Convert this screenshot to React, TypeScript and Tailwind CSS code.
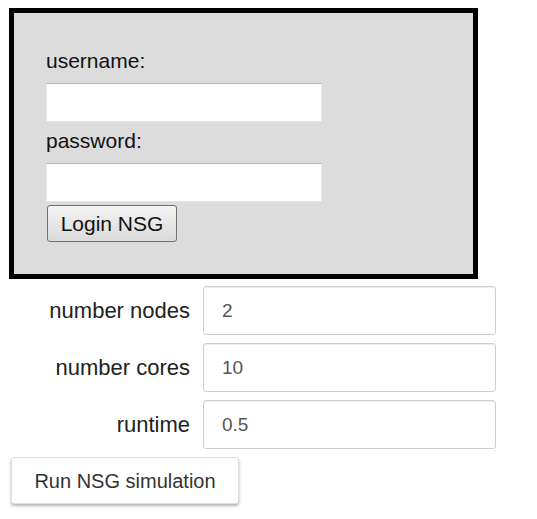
export default function App() {
  const rows = [
    { label: "number nodes", value: "2" },
    { label: "number cores", value: "10" },
    { label: "runtime", value: "0.5" },
  ];

  return (
    <div className="min-h-[519px] w-[537px] bg-white [font-family:'Liberation_Sans',Arial,sans-serif] pt-[8px]">
      {/* Login panel */}
      <div className="ml-[9px] h-[271px] w-[469px] border-[5px] border-black bg-[#dcdcdc] px-[32px] pt-[37px]">
        <div className="text-[21px] leading-[22px] text-[#111]">username:</div>
        <input
          type="text"
          className="mt-[11px] block h-[39px] w-[276px] border border-[#e6e6e6] border-t-[#b4b4b4] bg-white outline-none"
        />
        <div className="mt-[8px] text-[21px] leading-[22px] text-[#111]">password:</div>
        <input
          type="password"
          className="mt-[11px] block h-[39px] w-[276px] border border-[#e6e6e6] border-t-[#b4b4b4] bg-white outline-none"
        />
        <button className="mt-[3px] ml-[1px] flex h-[37px] w-[130px] items-center justify-center rounded-[3px] border border-[#707070] bg-gradient-to-b from-[#f4f4f4] to-[#dadada] text-[21px] text-[#111]">
          Login NSG
        </button>
      </div>

      {/* Simulation parameters */}
      <div className="mt-[7px] flex flex-col gap-[8px]">
        {rows.map((r) => (
          <div key={r.label} className="grid grid-cols-[190px_293px] items-center gap-[13px]">
            <span className="text-right text-[22px] text-[#222]">{r.label}</span>
            <input
              type="text"
              defaultValue={r.value}
              className="h-[49px] w-[293px] rounded-[3px] border border-[#cfcfcf] bg-white pl-[18px] text-[19px] text-[#555] shadow-[inset_0_1px_1px_rgba(0,0,0,0.08)] outline-none"
            />
          </div>
        ))}
      </div>

      <button className="mt-[8px] ml-[11px] h-[47px] w-[228px] rounded-[3px] border border-[#dedede] bg-white text-[20px] text-[#333] shadow-[0_2px_3px_rgba(0,0,0,0.3)]">
        Run NSG simulation
      </button>
    </div>
  );
}
